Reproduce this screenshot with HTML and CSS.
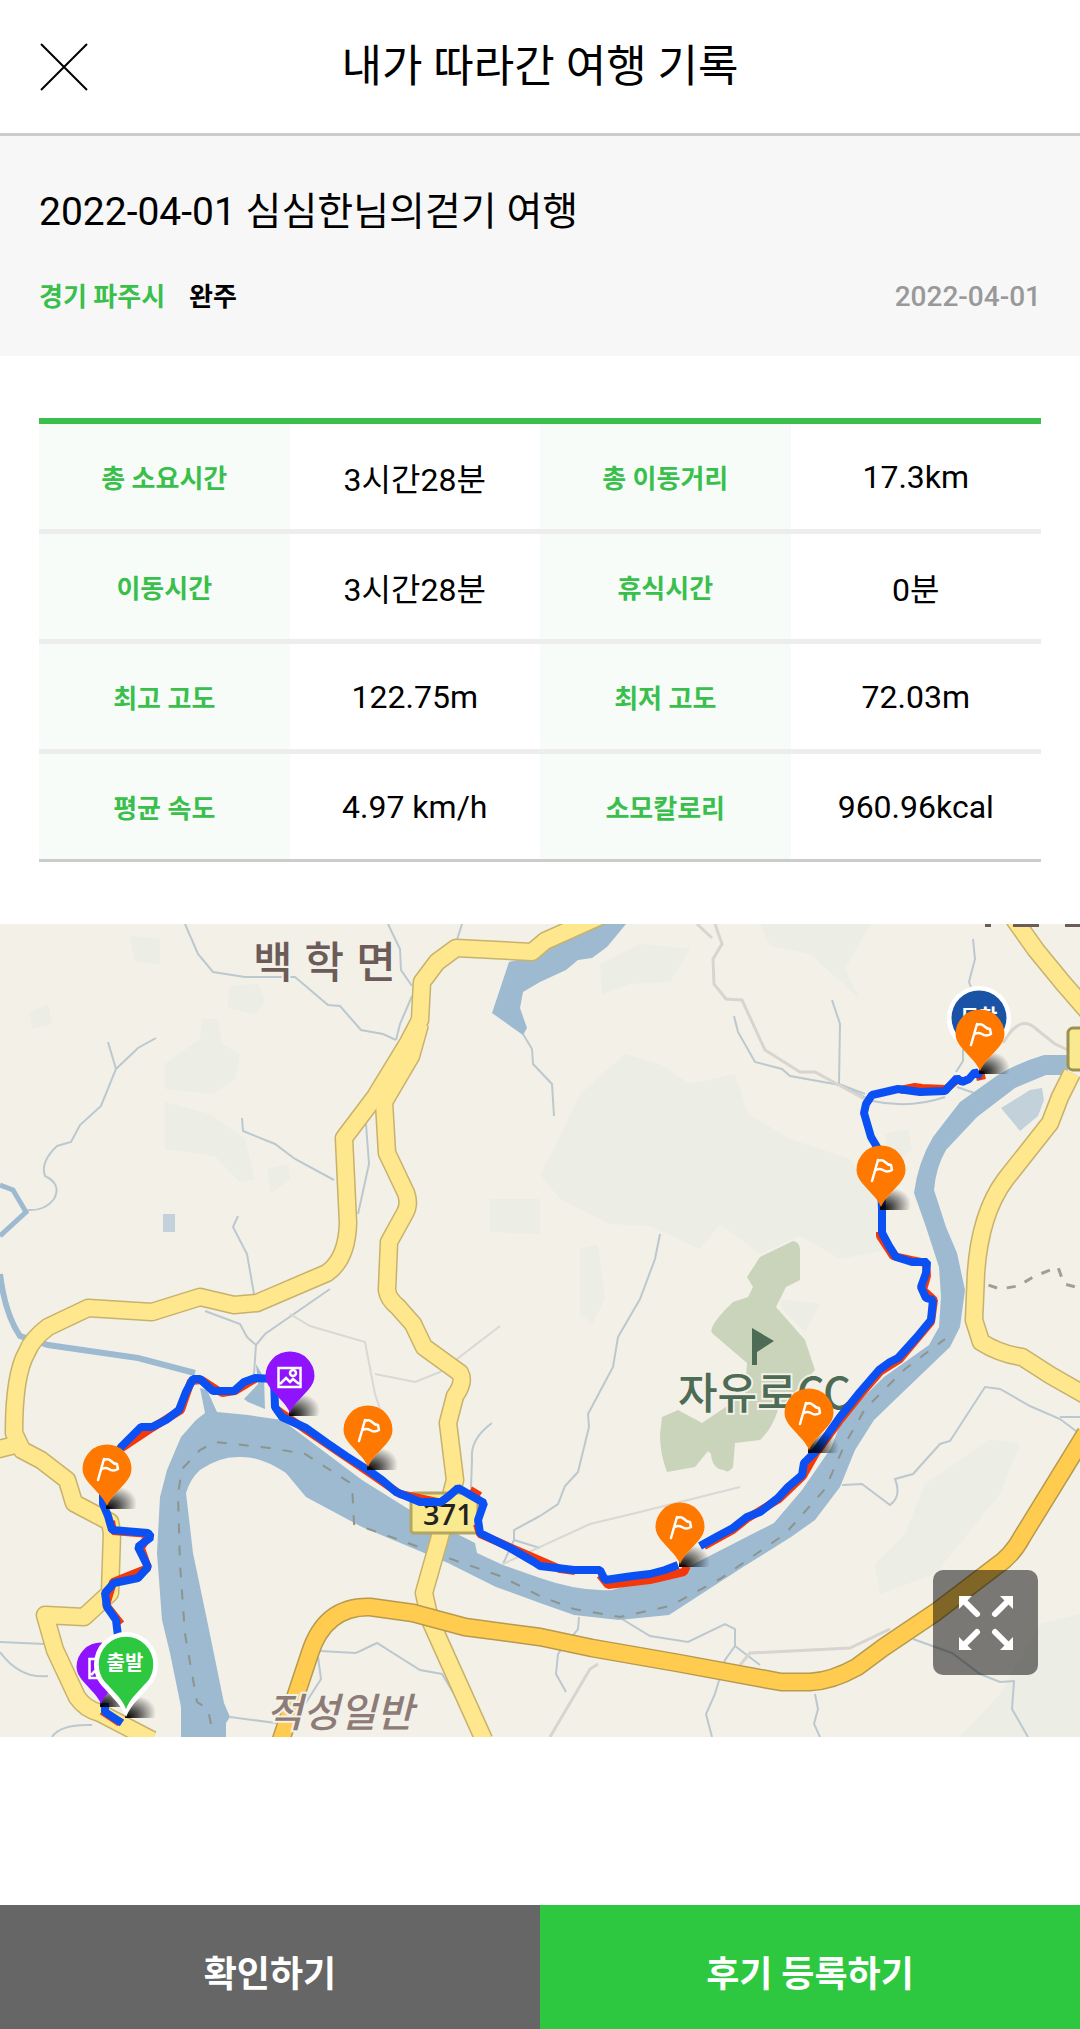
FILE: index.html
```html
<!DOCTYPE html>
<html lang="ko">
<head>
    <meta charset="UTF-8">
    <meta name="viewport" content="width=device-width, initial-scale=1.0">
    <title>내가 따라간 여행 기록</title>
    <link rel="stylesheet" href="styles.css">
</head>
<body>
    <header class="header">
        <button type="button" class="close-btn" aria-label="닫기">
            <svg viewBox="0 0 48 48"><path d="M1 1L47 47M47 1L1 47"/></svg>
        </button>
        <h1>내가 따라간 여행 기록</h1>
    </header>

    <section class="summary">
        <h2>2022-04-01 심심한님의걷기 여행</h2>
        <div class="summary-info">
            <span class="region">경기 파주시</span>
            <span class="status">완주</span>
            <time class="date" datetime="2022-04-01">2022-04-01</time>
        </div>
    </section>

    <main>
        <div class="record">
            <table class="record-table">
                <tr>
                    <th scope="row">총 소요시간</th><td>3시간28분</td>
                    <th scope="row">총 이동거리</th><td>17.3km</td>
                </tr>
                <tr>
                    <th scope="row">이동시간</th><td>3시간28분</td>
                    <th scope="row">휴식시간</th><td>0분</td>
                </tr>
                <tr>
                    <th scope="row">최고 고도</th><td>122.75m</td>
                    <th scope="row">최저 고도</th><td>72.03m</td>
                </tr>
                <tr>
                    <th scope="row">평균 속도</th><td>4.97 km/h</td>
                    <th scope="row">소모칼로리</th><td>960.96kcal</td>
                </tr>
            </table>
        </div>

        <div class="map">
            <svg class="map-canvas" viewBox="0 0 1080 813" role="img" aria-label="이동 경로 지도">
                <defs>
                    <radialGradient id="shade" gradientUnits="userSpaceOnUse" cx="0" cy="0" r="30" gradientTransform="translate(1 3) rotate(-22) scale(1 0.700)">
                        <stop offset="0" stop-color="#000"/>
                        <stop offset="0.350" stop-color="#000" stop-opacity="0.700"/>
                        <stop offset="1" stop-color="#000" stop-opacity="0"/>
                    </radialGradient>
                    <path id="shadow" fill="url(#shade)" d="M-1 3V-2L10 -14L20 -24H34V3Z"/>
                    <path id="pin" d="M0 0Q-3 -7 -10 -14L-19 -24C-22 -28 -24.500 -32 -24.500 -37A24.500 24.500 0 0 1 24.500 -37C24.500 -32 22 -28 19 -24L10 -14Q3 -7 0 0Z"/>
                    <g id="flag-pin">
                        <use href="#shadow"/>
                        <use href="#pin" fill="#ff7800"/>
                        <path d="M-9 -26L-3 -47M-3 -46Q1 -48 4 -45Q7 -42 10 -42L11 -37Q6 -34 2 -37Q-2 -39 -5 -37" fill="none" stroke="#fff" stroke-width="2.500" stroke-linecap="round" stroke-linejoin="round"/>
                    </g>
                    <g id="photo-pin">
                        <use href="#shadow"/>
                        <use href="#pin" fill="#9013fe"/>
                        <path d="M-11.500 -45H10.500V-26H-11.500ZM-10 -29L-4 -35L0 -31L3 -34L9 -29" fill="none" stroke="#fff" stroke-width="2.500"/>
                        <circle cx="3" cy="-40" r="3" fill="none" stroke="#fff" stroke-width="2.500"/>
                    </g>
                    <path id="big-pin" d="M0 0Q-4 -10 -13 -19L-22 -29C-28 -35 -32 -42 -32 -53A32 32 0 0 1 32 -53C32 -42 28 -35 22 -29L13 -19Q4 -10 0 0Z"/>
                </defs>

                <rect width="1080" height="813" fill="#f3f0e8"/>

                <!-- 산지 -->
                <g fill="#ecede5">
                    <path d="M555 222L580 170L625 130L660 140L690 160L735 150L748 190L790 215L850 235L885 290L890 325L840 335L800 312L760 330L720 300L700 325L650 302L610 300L560 275L540 250Z"/>
                    <path d="M600 40L640 20L690 25L670 58L630 60L602 70Z"/>
                    <path d="M760 0L870 0L845 45L860 75L810 30L770 22Z"/>
                    <path d="M165 140L200 115L202 95L218 95L222 120L240 130L235 155L212 170L165 165ZM165 178L210 190L245 215L255 255L240 258L215 232L165 225Z"/>
                    <path d="M230 62L258 60L265 78L255 90L228 84ZM130 12L160 15L160 40L135 38ZM30 88L48 80L52 100L32 105Z"/>
                    <path d="M490 275L540 275L540 310L490 308ZM268 245L288 240L290 255L270 270Z"/>
                    <path d="M990 515L1020 520L1000 570L935 650L880 670L875 640L905 610L925 560Z"/>
                    <path d="M580 325L598 320L605 375L592 400L580 390ZM1040 700L1080 690V813H960L1000 770Z"/>
                    <path d="M780 375L820 380L805 408L782 385ZM885 210L908 205L912 225L890 245Z"/>
                </g>
                <path fill="#c9d4ba" d="M793 317Q800 318 800 326V356L786 363L776 383L805 416L815 446L778 486Q772 505 760 516L735 519L733 543Q728 550 724 546Q712 545 711 530L708 527L695 543L667 548Q660 530 660 510L662 493L678 486L702 499L745 470L747 439L712 409Q708 402 733 378L748 373L753 363L747 353L760 333Z"/>

                <!-- 하천 -->
                <g fill="none" stroke="#bcc8cf" stroke-width="2">
                    <path d="M108 118L116 145L101 182L80 201L71 218L57 222Q40 238 45 252Q62 260 54 275Q45 287 28 286M116 145L138 124L156 114"/>
                    <path d="M185 0L198 30L213 48L245 53H295L328 81L340 82L361 106L383 110L396 116"/>
                    <path d="M242 194L243 207L275 220L295 235L334 256M238 292L233 303L247 330L254 370"/>
                    <path d="M388 0L400 25L401 46L412 62M462 0L457 16M412 72L400 100L396 116M366 200L369 240L358 290"/>
                    <path d="M523 110L532 125L533 140L552 160L554 192M660 310L655 335L640 375L618 413L613 443L588 490L589 503L578 548L565 562L558 580L540 592"/>
                    <path d="M330 365L265 410L256 421L254 450M205 387L240 400L247 413L256 421"/>
                    <path d="M832 76L840 100L839 160L865 170M734 92L738 108L755 138L782 145L790 152L840 161L872 177Q910 185 945 173M973 15L975 35L969 58L971 63M956 148L963 137V125M957 163L977 170"/>
                    <path d="M0 718L45 720M0 728Q20 755 48 752M52 813Q60 800 92 801M320 727L356 729L377 719L420 746L442 750L460 780M318 733L321 755L305 780M230 793L276 799"/>
                    <path d="M492 499Q470 515 472 535L471 564M540 592L514 606V616L503 640M514 616L540 624M579 693L578 705L558 730L556 750L566 768M622 695L650 712L688 718L725 700L735 705V722L725 736L715 770L706 790L712 813M735 722L760 741M815 770L818 785L814 800L820 813"/>
                    <path d="M842 561L862 560L890 581Q902 572 895 555L913 550L940 520L950 517L985 463L1000 465L1030 482L1060 495L1080 510M1060 493H1080M913 715L952 729L980 750L1000 758L1014 757L1012 785L1028 813"/>
                </g>
                <g fill="none" stroke="#d8d4cf" stroke-width="3">
                    <path d="M715 0L722 20L713 35L714 60L726 75L742 76L765 126L800 148H815L870 178M1003 119Q1020 90 1035 104L1055 120L1068 126M697 0L712 14"/>
                    <path d="M550 813L590 745L598 740M740 741L750 729L850 724L890 705"/>
                </g>
                <g fill="none" stroke="#d8d8d4" stroke-width="2">
                    <path d="M290 390L310 402L365 418L375 470L380 485M375 450L415 458L440 448L500 402M503 640L590 600L640 588L740 563"/>
                </g>
                <g fill="none" stroke="#9dbad1">
                    <path d="M0 261L13 266L26 288L0 312" stroke-width="5"/>
                    <path d="M0 350Q5 390 20 412L48 421L138 434L195 449" stroke-width="6"/>
                </g>
                <g fill="#9dbad1">
                    <path d="M509 38L492 89L513 104L523 111L527 104L520 84L523 68L540 58L566 46L578 36L592 34L607 23L626 0H585L540 31Z"/>
                    <path d="M1068 131H1044Q1020 138 998 151L960 178L933 213Q918 238 914 269L926 303L939 343L941 373L939 403L929 421L884 453L843 493L831 524L802 566L774 599L688 643L612 666Q580 668 540 654L503 641L477 629L475 619L410 586L362 556L282 496L248 491L217 488L207 466L200 464L205 489L196 496L181 513L167 546L160 573L157 629L162 696L170 729L181 783V816H226V799L230 793L224 779L207 696L193 629L186 569Q190 555 200 546Q220 532 240 533Q260 532 286 549L306 573L362 603L410 623L448 639L496 663L540 679L574 691L619 696L669 691L743 643L791 613L815 596L840 563L855 526L874 496L902 469L950 423L960 403L965 366L957 329L946 303L934 266Q936 243 946 226L977 193L1015 164L1046 151H1068Z"/>
                    <path d="M244 475L258 460L256 440L264 454L265 485L248 478Z"/>
                </g>
                <g fill="#c2d1da">
                    <path d="M163 290H175V308H163ZM1001 184L1030 166L1042 164L1044 176L1038 192L1020 207Z"/>
                </g>
                <g fill="none" stroke="#8d948c" stroke-width="2" stroke-dasharray="10 12">
                    <path d="M211 800L208 785L197 778L185 710L180 640L178 570L182 545L200 526L215 518L270 524L305 530L352 560L354 600L400 616L448 634L500 652L540 672L574 685L620 693L670 682L720 655L785 610L825 565L845 520L865 485L905 445L945 415"/>
                </g>
                <path d="M970 357L985 360L1000 365L1018 362L1035 352L1058 343L1064 360L1080 364" fill="none" stroke="#a39e94" stroke-width="3" stroke-dasharray="9 10"/>

                <!-- 도로 -->
                <g fill="none" stroke-linejoin="round">
                    <g stroke="#c7b26c" stroke-width="19">
                        <path id="road-west" d="M605 -10L545 17L532 28L456 24L437 38L422 58L420 96L408 119L375 173L344 214L348 299Q347 335 327 349L257 379L234 381L200 373L152 388L88 384L48 403Q32 415 27 428Q14 450 14 509L22 526L41 536L67 556L74 579L110 598L112 609L110 669L84 693L45 691L55 726L77 773Q85 785 100 789L152 816"/>
                        <path id="road-mid" d="M420 100L411 132L384 178L387 229L406 269Q410 280 405 289L389 318L387 366Q388 375 398 383L413 400L424 423L460 449Q465 458 455 472L448 499L455 556L441 609L424 669L430 696L484 816"/>
                        <path id="road-east" d="M1014 -5L1036 26L1063 59L1090 90M1072 149L1060 173L1050 199L1005 256Q980 290 976 349L974 396L981 418Q1000 430 1022 433L1050 451L1085 471M-5 526L15 521"/>
                    </g>
                    <g stroke="#ffe78d" stroke-width="16">
                        <use href="#road-west"/>
                        <use href="#road-mid"/>
                        <use href="#road-east"/>
                    </g>
                    <path id="highway" d="M281 816L310 729Q325 682 370 683L413 689L465 703L540 713L592 724L678 739L781 758H810Q832 757 857 743L884 723L936 688L995 643Q1012 632 1022 613L1086 509"/>
                    <use href="#highway" stroke="#b79a4e" stroke-width="19"/>
                    <use href="#highway" stroke="#ffcc4f" stroke-width="16"/>
                </g>
                <rect x="1068" y="104" width="30" height="42" rx="5" fill="#f9e98f" stroke="#9d9152" stroke-width="3"/>
                <rect x="411" y="569" width="67" height="40" rx="3" fill="#f9e98f" stroke="#b3a562" stroke-width="3"/>

                <!-- 지명 -->
                <g class="place">
                    <text x="253" y="54" font-size="43" fill="#6b5b59">백 학 면</text>
                    <text x="678" y="485" font-size="43" fill="#4d6b55">자유로CC</text>
                    <text x="266" y="803" font-size="40" fill="#8d7b77" font-style="italic">적성일반</text>
                    <text x="423" y="601" font-size="29" fill="#222" class="road-no">371</text>
                </g>
                <path fill="#4d6b55" d="M752 404L774 417L757 428V441H752Z"/>
                <path d="M985 1H991M1013 1H1039M1065 1H1080" stroke="#6b5b59" stroke-width="4"/>

                <!-- 이동 경로 -->
                <g fill="none" stroke-width="8" stroke-linejoin="bevel">
                    <path stroke="#f5380a" d="M985 151L976 153M957 156L946 165L922 164L915 163L900 166M880 308L880 312L893 332L911 336L926 339L927 352L923 366L934 376L931 398L900 435L881 447L861 470L841 495L816 529L803 552L779 575L748 594L733 606L704 622M687 642L684 648L650 656L608 661L600 651M575 647L560 645L480 610L477 600M480 572L470 566M442 579L400 570L368 548L306 506L276 485M255 455L235 467L222 469L202 456L191 457L181 486L152 504L122 524M111 597L113 607L149 610L141 624L148 644L113 658L106 681L121 700M102 787L120 799"/>
                    <path stroke="#0b50f3" d="M982 152L975 148L969 155L962 158L957 154L945 167L920 168L898 165L872 171L866 180L864 189L871 213L880 228L882 286V309L889 322L896 333L912 338H927L926 349L921 363L926 374L933 376L931 396L917 413L898 434L890 438L879 446L860 468L840 493L828 510L815 528L804 539L802 551L788 563L778 574L760 588L747 593L733 604L718 612L700 622M678 641L665 646L650 650L633 652L605 656L600 646H574L540 642L534 638L510 624L480 609L478 596L484 579L458 564L449 572L441 578H420L396 568L382 556L368 546L346 532L327 519L306 504L282 493L275 483L274 455L255 454L244 458L234 467H213L200 455H193L186 468L179 486L166 496L152 503H141L121 523L103 560V580L108 592L112 606L148 609L151 613L138 623L148 643L138 654L114 659L105 669L107 683L116 696L119 720M105 779V788L122 799"/>
                </g>

                <!-- 마커 -->
                <g class="marker-text">
                    <use href="#big-pin" transform="translate(979 147)" fill="#fff"/>
                    <circle cx="979" cy="94" r="27.500" fill="#1a53a5"/>
                    <text x="979" y="100" fill="#fff">도착</text>
                    <use href="#flag-pin" x="980" y="147"/>
                    <use href="#flag-pin" x="881" y="283"/>
                    <use href="#flag-pin" x="809" y="526"/>
                    <use href="#flag-pin" x="680" y="640"/>
                    <use href="#flag-pin" x="368" y="543"/>
                    <use href="#flag-pin" x="107" y="582"/>
                    <use href="#photo-pin" x="290" y="489"/>
                    <use href="#photo-pin" x="101" y="780"/>
                    <use href="#shadow" x="126" y="791"/>
                    <use href="#big-pin" transform="translate(126 793)" fill="#fff"/>
                    <use href="#big-pin" transform="translate(126 785) scale(0.850)" fill="#2dc83f"/>
                    <text x="125" y="746" fill="#fff">출발</text>
                </g>
            </svg>
            <button type="button" class="expand-btn" aria-label="지도 크게 보기">
                <svg viewBox="0 0 54 54">
                    <g id="arrow">
                        <path d="M0 0H13L0 13Z"/>
                        <path d="M5 5L18 18" class="line"/>
                    </g>
                    <use href="#arrow" transform="matrix(-1 0 0 1 54 0)"/>
                    <use href="#arrow" transform="matrix(1 0 0 -1 0 54)"/>
                    <use href="#arrow" transform="matrix(-1 0 0 -1 54 54)"/>
                </svg>
            </button>
        </div>
    </main>

    <footer class="footer">
        <button type="button" class="confirm-btn">확인하기</button>
        <button type="button" class="review-btn">후기 등록하기</button>
    </footer>
</body>
</html>
```
FILE: styles.css
```css
* {
    box-sizing: border-box;
}

body {
    font-family: Roboto, "Noto Sans CJK KR", sans-serif;
    margin: 0;
    min-height: 100vh;
    display: flex;
    flex-direction: column;
    background: #fff;
    color: #000;
}

h1,
h2 {
    margin: 0;
    font-weight: 400;
}

button {
    border: none;
    padding: 0;
    font-family: inherit;
    cursor: pointer;
}

.header {
    display: grid;
    grid-template-columns: 1fr auto 1fr;
    align-items: center;
    height: 136px;
    padding: 0 40px;
    border-bottom: 3px solid #ccc;
}

.header h1 {
    font-size: 44px;
    line-height: 64px;
}

.close-btn {
    width: 48px;
    height: 48px;
    background: none;
}

.close-btn svg {
    display: block;
    fill: none;
    stroke: #000;
    stroke-width: 2;
}

.summary {
    background: #f7f7f7;
    padding: 46px 39px 39px;
}

.summary h2 {
    font-size: 39px;
    line-height: 60px;
}

.summary-info {
    display: flex;
    align-items: center;
    margin-top: 35px;
    font-size: 26px;
    font-weight: 700;
    line-height: 40px;
}

.region {
    color: #3abf4d;
}

.status {
    margin-left: 24px;
}

.date {
    margin-left: auto;
    color: #999;
    font-size: 28px;
    font-weight: 500;
}

.record {
    padding: 62px 39px;
}

.record-table {
    width: 100%;
    table-layout: fixed;
    border-collapse: separate;
    border-spacing: 0;
    border-top: 6px solid #3abf4d;
}

.record-table th,
.record-table td {
    height: 110px;
    padding: 0;
    text-align: center;
    border-bottom: 5px solid #ededed;
}

.record-table th {
    background: #f7fcf8;
    color: #3abf4d;
    font-size: 26px;
    font-weight: 700;
}

.record-table td {
    font-size: 32px;
}

.record-table tr:last-child th,
.record-table tr:last-child td {
    height: 108px;
    border-bottom: 3px solid #ccc;
}

.map {
    position: relative;
}

.map-canvas {
    display: block;
    width: 100%;
    height: auto;
}

.place {
    font-family: "Noto Sans CJK KR", sans-serif;
    font-weight: 500;
    stroke: #f3f0e8;
    stroke-width: 4px;
    paint-order: stroke;
}

.road-no {
    font-family: "Open Sans", sans-serif;
    font-weight: 600;
    stroke: none;
}

.marker-text {
    font-size: 20px;
    font-weight: 700;
    text-anchor: middle;
}

.expand-btn {
    position: absolute;
    right: 42px;
    bottom: 62px;
    width: 105px;
    height: 105px;
    border-radius: 10px;
    background: rgba(0, 0, 0, 0.5);
    display: flex;
    align-items: center;
    justify-content: center;
}

.expand-btn svg {
    width: 54px;
    height: 54px;
    fill: #fff;
}

.expand-btn .line {
    stroke: #fff;
    stroke-width: 6;
    stroke-linecap: round;
}

.footer {
    display: flex;
    margin-top: auto;
}

.footer button {
    flex: 1;
    height: 124px;
    padding-top: 8px;
    color: #fff;
    font-size: 36px;
    font-weight: 700;
}

.confirm-btn {
    background: #666;
}

.review-btn {
    background: #2dc83f;
}
```
